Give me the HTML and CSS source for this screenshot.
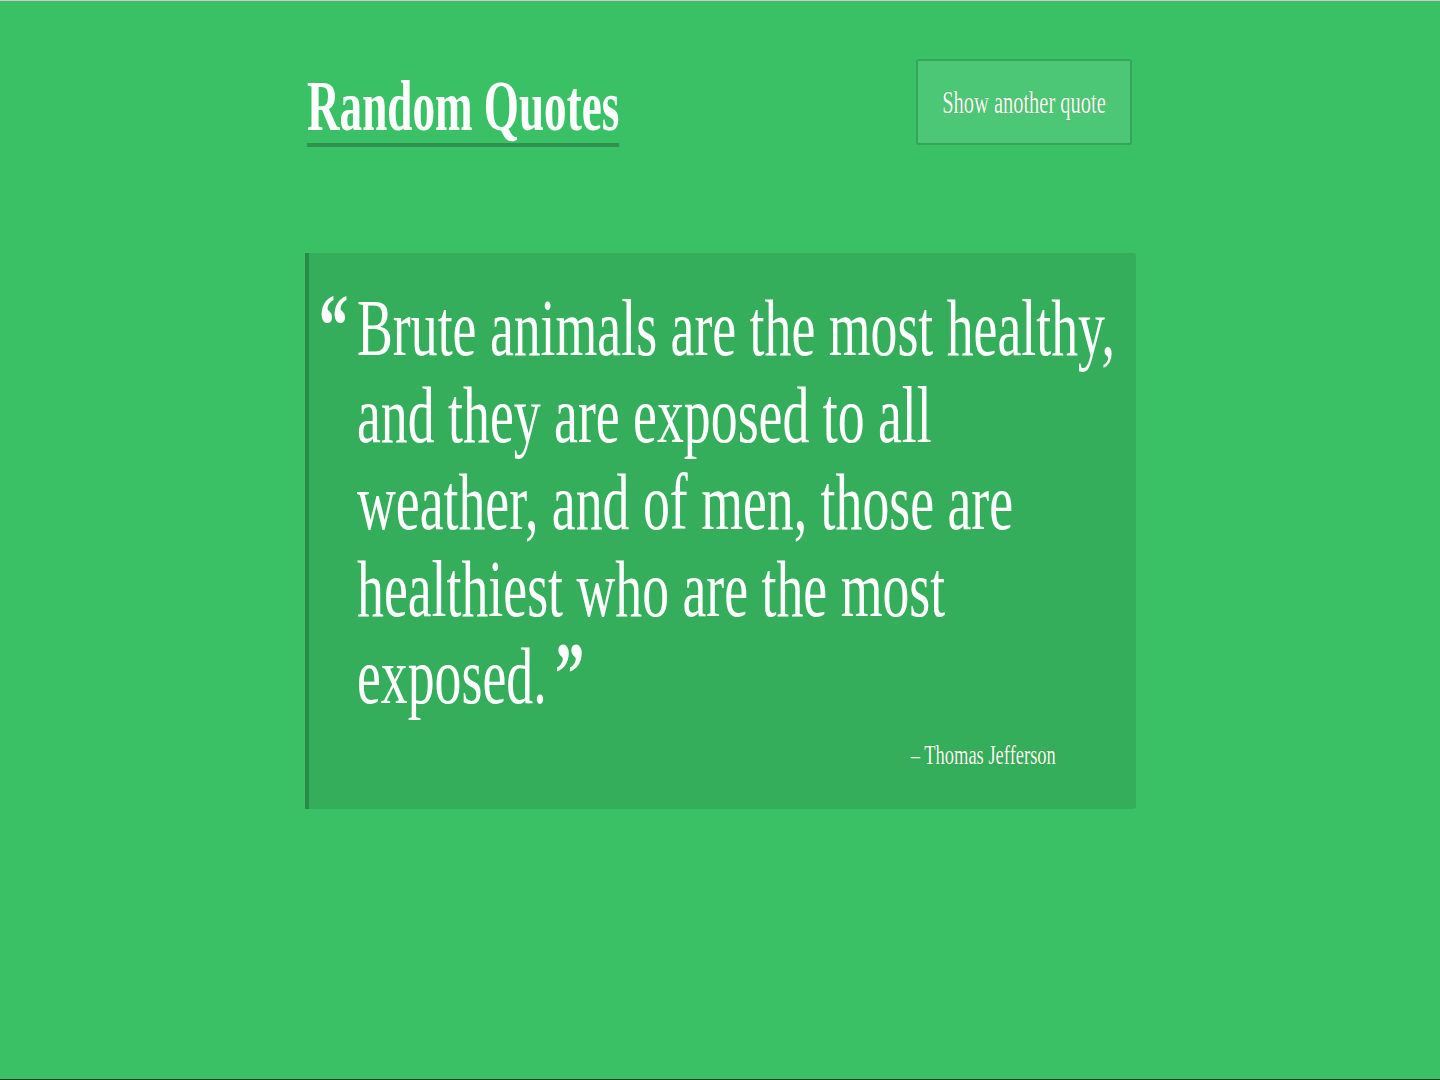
FILE: index.html
```html
<!DOCTYPE html>
<html lang="en">
<head>
<meta charset="utf-8">
<title>Random Quotes</title>
<link rel="stylesheet" href="styles.css">
</head>
<body>
  <div class="page">
    <header class="top">
      <h1 class="title">Random Quotes</h1>
      <button class="btn" type="button"><span class="btn-label">Show another quote</span></button>
    </header>
    <blockquote class="quote">
      <p class="quote-text"><span class="qm qm-open">“</span>Brute animals are the most healthy, and they are exposed to all weather, and of men, those are healthiest who are the most exposed.<span class="qm qm-close">”</span></p>
      <p class="author"><span class="author-name">– Thomas Jefferson</span></p>
    </blockquote>
  </div>
</body>
</html>
```

FILE: styles.css
```css
html {
  background: #173a22;
}

body {
  margin: 0;
  min-height: 1078px;
  border-top: 1px solid #cfc7cc;
  background: #3ac166;
  font-family: "Liberation Serif", "Times New Roman", serif;
  color: #ffffff;
  overflow: hidden;
}

.page {
  width: 831px;
  margin: 0 auto;
}

.top {
  display: flex;
  justify-content: space-between;
  align-items: flex-start;
}

.title {
  display: inline-block;
  margin: 69px 0 0 2px;
  padding-bottom: 1px;
  font-size: 72px;
  line-height: 72px;
  font-weight: bold;
  border-bottom: 4px solid #2e9250;
  transform: scaleX(0.627);
  transform-origin: left top;
  white-space: nowrap;
}

.btn {
  display: flex;
  align-items: center;
  justify-content: center;
  width: 216px;
  height: 86px;
  margin: 58px 4px 0 0;
  padding: 0;
  background: #4cc775;
  border: 2px solid #37a45c;
  border-radius: 3px;
  color: #fbfbf5;
  font-family: inherit;
  overflow: visible;
}

.btn-label {
  display: inline-block;
  flex: none;
  font-size: 31px;
  line-height: 31px;
  white-space: nowrap;
  transform: scaleX(0.66);
  transform-origin: center;
  text-shadow: 0 0 1px rgba(0, 60, 20, 0.35);
}

.quote {
  margin: 106px 0 0;
  padding: 32px 0 40px;
  background: #34ae5a;
  border-left: 4px solid #2a8a48;
  border-radius: 0 3px 3px 0;
}

.quote-text {
  width: 1141px;
  margin: 0 0 0 48px;
  font-size: 80px;
  line-height: 87px;
  text-indent: -57px;
  transform: scaleX(0.672);
  transform-origin: left top;
}

.qm {
  font-weight: bold;
  font-size: 88px;
  line-height: 0;
}

.qm-open {
  margin-right: 13px;
}

.qm-close {
  margin-left: 12px;
}

.author {
  margin: 21px 0 0;
  padding-right: 80px;
  text-align: right;
  font-size: 28px;
  line-height: 28px;
}

.author-name {
  display: inline-block;
  white-space: nowrap;
  color: #fbfbf2;
  transform: scaleX(0.66);
  transform-origin: right top;
  text-shadow: 0 0 1px rgba(0, 60, 20, 0.35);
}
```
